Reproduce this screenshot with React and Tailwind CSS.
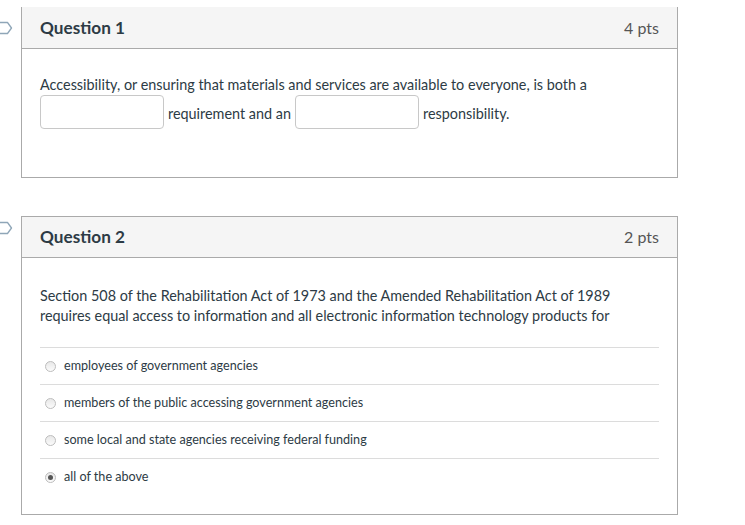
import React from "react";

function Flag({ top }) {
  return (
    <svg
      className="absolute left-0"
      style={{ top }}
      width="13"
      height="14"
      viewBox="0 0 13 14"
      fill="none"
    >
      <path
        d="M-4 1.5 H7.5 L11.5 7 L7.5 12.5 H-4"
        stroke="#8fa6b8"
        strokeWidth="1.3"
        strokeLinejoin="round"
      />
    </svg>
  );
}

function Header({ title, pts, topBorder }) {
  return (
    <div
      className={
        "flex items-center justify-between h-[42px] bg-[#f5f5f5] border-b border-[#aaaaaa] pl-[18px] pr-[18px] " +
        (topBorder ? "border-t" : "")
      }
    >
      <span className="text-[17.2px] font-bold text-[#2d3b45] leading-none">{title}</span>
      <span className="text-[16px] text-[#555555] leading-none">{pts}</span>
    </div>
  );
}

function Radio({ checked }) {
  return (
    <span className="w-[11px] h-[11px] rounded-full border border-[#bdbdbd] bg-gradient-to-b from-[#e8e8e8] to-[#fbfbfb] flex items-center justify-center shrink-0">
      {checked && <span className="w-[5px] h-[5px] rounded-full bg-[#555555]" />}
    </span>
  );
}

export default function App() {
  const answers = [
    { t: "employees of government agencies" },
    { t: "members of the public accessing government agencies" },
    { t: "some local and state agencies receiving federal funding" },
    { t: "all of the above", c: true },
  ];
  return (
    <div
      className="relative w-[745px] h-[525px] bg-white pl-[21px] pt-[7px]"
      style={{ fontFamily: "Lato, 'Open Sans', sans-serif" }}
    >
      <Flag top={21} />
      <Flag top={221} />
      <div className="w-[657px] border-x border-b border-[#aaaaaa]">
        <Header title="Question 1" pts="4 pts" />
        <div className="px-[18px] pt-[26px] pb-[48px] text-[14.4px] text-[#2d3b45] leading-[20px]">
          <div>
            Accessibility, or ensuring that materials and services are available to everyone, is both a
          </div>
          <div className="flex items-center">
            <span className="w-[124px] h-[34px] rounded-[4px] border border-[#c8c8c8] bg-white" />
            <span className="ml-[4px] mr-[4px] pt-[3px]">requirement and an</span>
            <span className="w-[124px] h-[34px] rounded-[4px] border border-[#c8c8c8] bg-white" />
            <span className="ml-[4px] pt-[3px]">responsibility.</span>
          </div>
        </div>
      </div>

      <div className="w-[657px] mt-[38px] border-x border-b border-[#aaaaaa]">
        <Header title="Question 2" pts="2 pts" topBorder />
        <div className="px-[18px] pt-[28px] pb-[19px] text-[#2d3b45]">
          <div className="text-[14.4px] leading-[20px]">
            Section 508 of the Rehabilitation Act of 1973 and the Amended Rehabilitation Act of 1989
            <br />
            requires equal access to information and all electronic information technology products for
          </div>
          <div className="mt-[21px]">
            {answers.map((a, i) => (
              <div
                key={i}
                className="flex items-center h-[37px] border-t border-[#dcdcdc] pl-[5px] gap-[8px] text-[12.6px]"
              >
                <Radio checked={a.c} />
                <span>{a.t}</span>
              </div>
            ))}
          </div>
        </div>
      </div>
    </div>
  );
}
